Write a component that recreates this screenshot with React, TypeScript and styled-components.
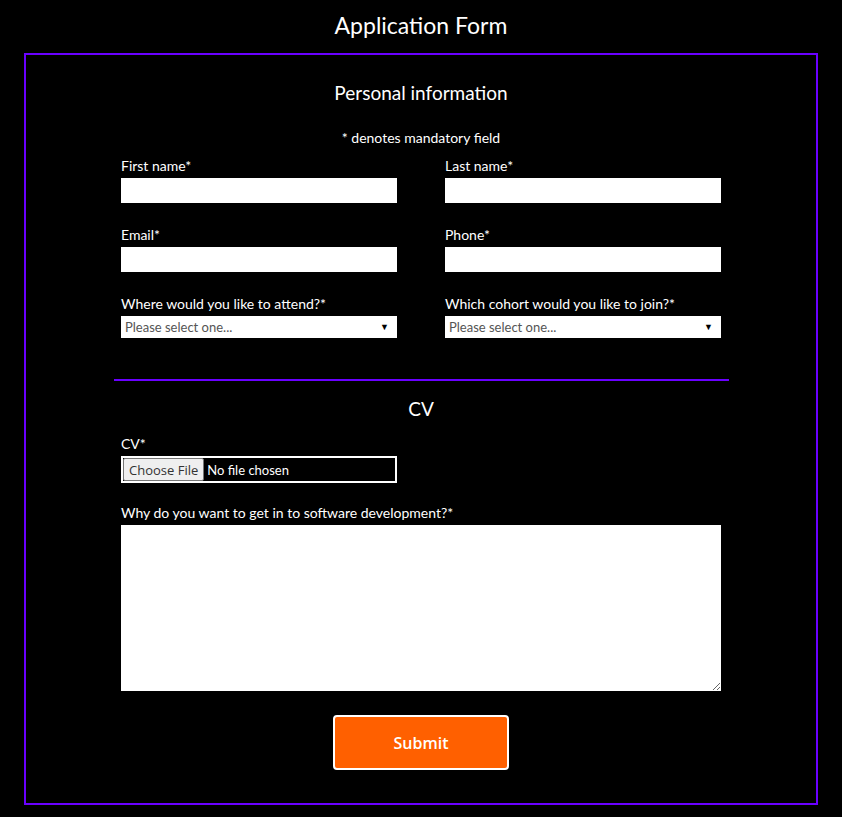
import React from 'react'
import styled, { createGlobalStyle } from 'styled-components'

const purple = '#6a00ff'

const GlobalStyle = createGlobalStyle`
  html, body {
    margin: 0;
    padding: 0;
    background: #000;
    color: #fff;
    font-family: Lato, 'Noto Sans', sans-serif;
  }
`

const Page = styled.div`
  display: flex;
  flex-direction: column;
  padding: 0 24px 12px 24px;
`

const Title = styled.h1`
  margin: 0;
  height: 53px;
  line-height: 50px;
  text-align: center;
  font-size: 23px;
  font-weight: 400;
`

const FormBox = styled.form`
  border: 2px solid ${purple};
  display: flex;
  flex-direction: column;
  align-items: center;
  padding: 26px 0 33px 0;
`

const SectionTitle = styled.h2`
  margin: 0;
  font-size: 19px;
  line-height: 24px;
  font-weight: 400;
  text-align: center;
`

const Note = styled.p`
  margin: 24px 0 10px 0;
  font-size: 14px;
  line-height: 18px;
`

const Grid = styled.div`
  display: grid;
  grid-template-columns: 276px 276px;
  column-gap: 48px;
  row-gap: 23px;
  width: 600px;
`

const Field = styled.div<{ $wide?: boolean }>`
  display: flex;
  flex-direction: column;
  gap: 3px;
  width: ${({ $wide }) => ($wide ? '600px' : '276px')};
`

const Label = styled.label`
  font-size: 14px;
  line-height: 18px;
`

const TextInput = styled.input`
  box-sizing: border-box;
  height: 25px;
  border: none;
  margin: 0;
  padding: 0 4px;
  background: #fff;
  font-family: inherit;
  font-size: 14px;
  outline: none;
`

const SelectWrap = styled.div`
  position: relative;
  height: 22px;

  &::after {
    content: '▼';
    position: absolute;
    right: 8px;
    top: 5px;
    font-size: 9px;
    color: #000;
    pointer-events: none;
  }
`

const Select = styled.select`
  appearance: none;
  box-sizing: border-box;
  width: 100%;
  height: 22px;
  border: none;
  border-radius: 0;
  margin: 0;
  padding: 0 4px;
  background: #fff;
  color: #555;
  font-family: inherit;
  font-size: 13px;
`

const Divider = styled.hr`
  width: 615px;
  margin: 41px 0 16px 0;
  border: none;
  border-top: 2px solid ${purple};
`

const Stack = styled.div`
  display: flex;
  flex-direction: column;
  gap: 21px;
  width: 600px;
  margin-top: 14px;
`

const FileInput = styled.input`
  box-sizing: border-box;
  width: 276px;
  height: 27px;
  margin: 0;
  border: 2px solid #fff;
  background: #000;
  color: #fff;
  font-family: inherit;
  font-size: 13px;

  &::file-selector-button {
    height: 23px;
    margin: 0 3px 0 0;
    padding: 0 5px;
    background: #efefef;
    border: 1px solid #767676;
    border-radius: 2px;
    color: #333;
    font-family: 'Open Sans', sans-serif;
    font-size: 13px;
  }
`

const TextArea = styled.textarea`
  box-sizing: border-box;
  width: 600px;
  height: 166px;
  margin: 0;
  border: none;
  background: #fff;
  font-family: inherit;
  font-size: 14px;
  outline: none;
`

const SubmitButton = styled.button`
  margin-top: 24px;
  width: 176px;
  height: 55px;
  background: #ff6000;
  border: 2px solid #fff;
  border-radius: 4px;
  color: #fff;
  font-family: 'Open Sans', sans-serif;
  font-weight: 600;
  font-size: 16px;
  cursor: pointer;
`

function SelectField({ label }: { label: string }) {
  return (
    <Field>
      <Label>{label}</Label>
      <SelectWrap>
        <Select defaultValue="">
          <option value="">Please select one...</option>
        </Select>
      </SelectWrap>
    </Field>
  )
}

function App() {
  return (
    <>
      <GlobalStyle />
      <Page>
        <Title>Application Form</Title>
        <FormBox onSubmit={(e) => e.preventDefault()}>
          <SectionTitle>Personal information</SectionTitle>
          <Note>* denotes mandatory field</Note>
          <Grid>
            <Field>
              <Label>First name*</Label>
              <TextInput type="text" />
            </Field>
            <Field>
              <Label>Last name*</Label>
              <TextInput type="text" />
            </Field>
            <Field>
              <Label>Email*</Label>
              <TextInput type="email" />
            </Field>
            <Field>
              <Label>Phone*</Label>
              <TextInput type="tel" />
            </Field>
            <SelectField label="Where would you like to attend?*" />
            <SelectField label="Which cohort would you like to join?*" />
          </Grid>

          <Divider />
          <SectionTitle>CV</SectionTitle>

          <Stack>
            <Field>
              <Label>CV*</Label>
              <FileInput type="file" />
            </Field>
            <Field $wide>
              <Label>Why do you want to get in to software development?*</Label>
              <TextArea />
            </Field>
          </Stack>

          <SubmitButton type="submit">Submit</SubmitButton>
        </FormBox>
      </Page>
    </>
  )
}

export default App
